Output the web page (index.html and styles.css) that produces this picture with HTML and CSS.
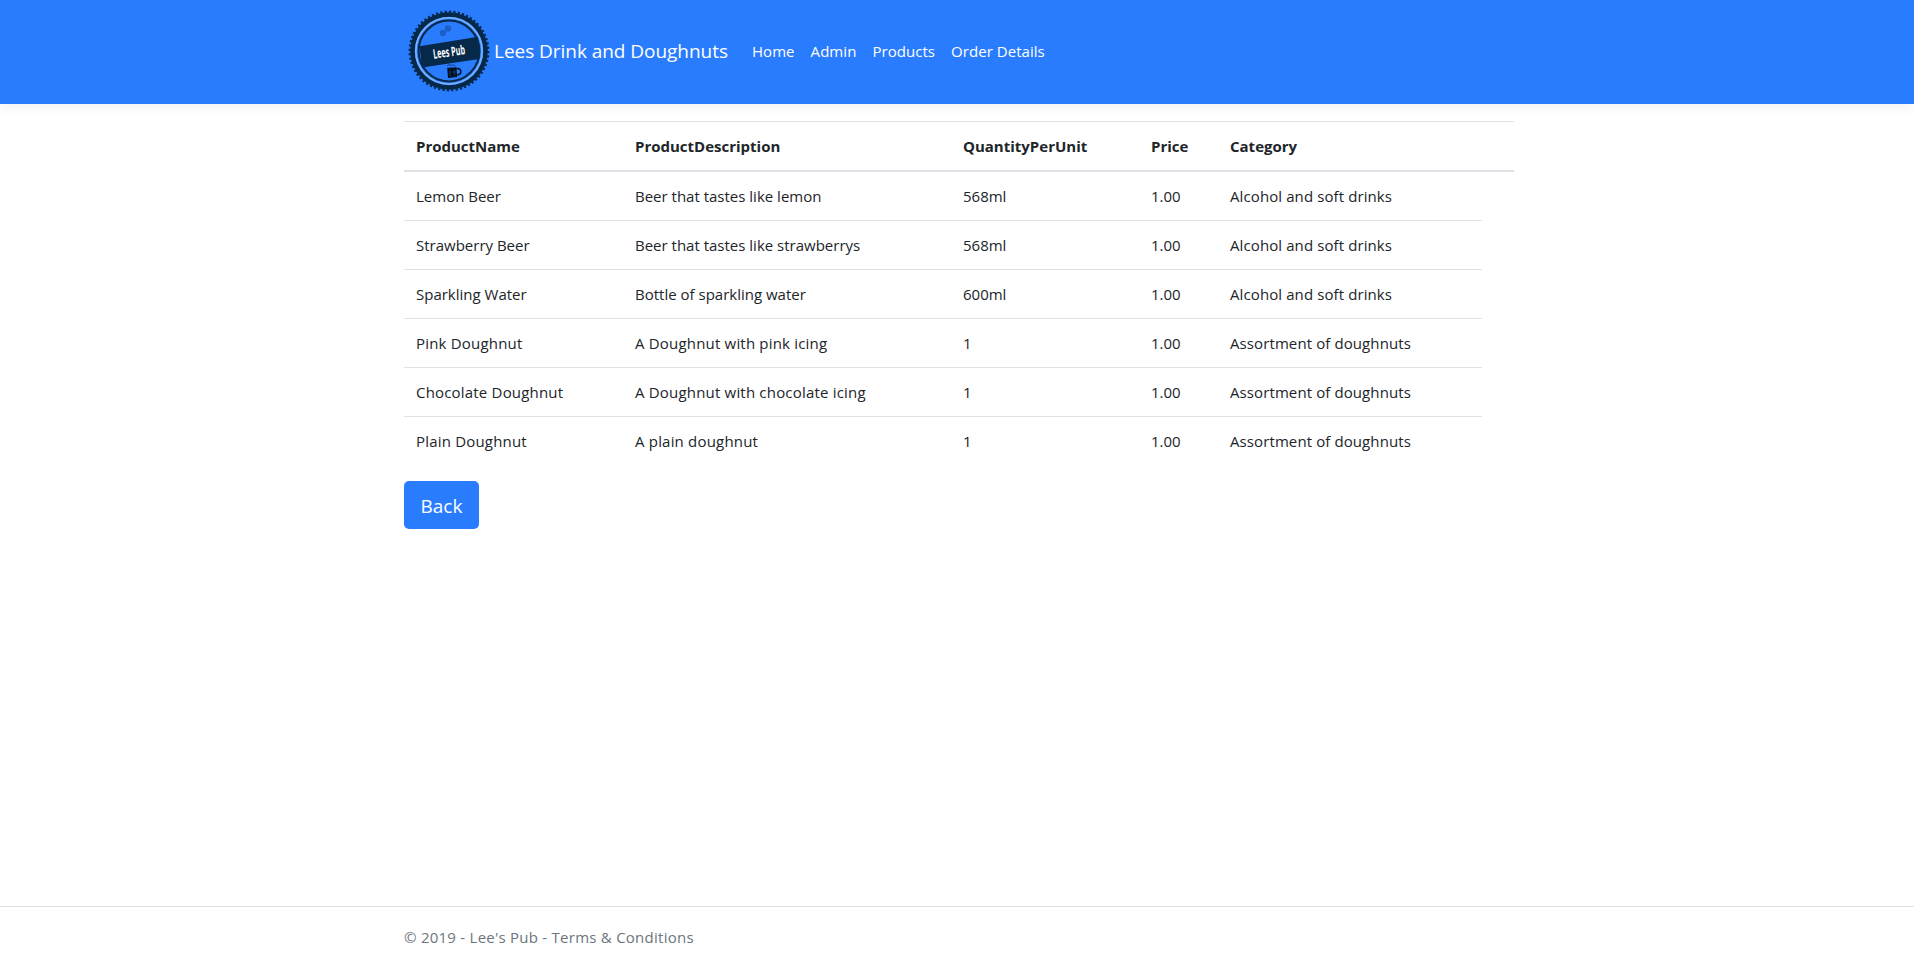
FILE: index.html
```html
<!DOCTYPE html>
<html lang="en">
<head>
<meta charset="utf-8">
<title>Products - Lees Drink and Doughnuts</title>
<link rel="stylesheet" href="styles.css">
</head>
<body>
<header class="navbar">
  <div class="container navbar-inner">
    <a class="brand">
      <svg class="logo" viewBox="0 0 90 90" width="90" height="90">
        <circle class="logo-teeth" cx="45" cy="45" r="38.8" pathLength="112"/>
        <circle class="logo-rim" cx="45" cy="45" r="34.2"/>
        <circle class="logo-light" cx="45" cy="45" r="33.2"/>
        <circle class="logo-inner" cx="45" cy="45" r="30.4"/>
        <g class="logo-candy"><circle cx="39" cy="27" r="3.2"/><circle cx="44" cy="22.5" r="3.2"/></g>
        <path class="logo-band" d="M15.5 40.3 L74 30.8 L75.5 53 L18 61.5 Z"/>
        <text class="logo-text" x="45" y="50.5" transform="rotate(-8 45 46)" textLength="32" lengthAdjust="spacingAndGlyphs">Lees Pub</text>
        <path class="logo-foam" d="M43 60 q2 -2.4 4 -.6 q2 -1.6 4.5 .6"/>
        <path class="logo-mug" d="M43.2 61.8 L52.5 61.2 L53.2 71 L44 72 Z"/>
        <path class="logo-handle" d="M52.5 62.8 q4 -.8 4.4 2.8 q0 3 -3.7 3.4"/>
        <path class="logo-glint" d="M45.8 64.5 l.4 5 M49 66.8 l1.6 -2 .3 4"/>
      </svg>
      <span class="brand-name">Lees Drink and Doughnuts</span>
    </a>
    <nav class="nav">
      <a>Home</a><a>Admin</a><a>Products</a><a>Order Details</a>
    </nav>
  </div>
</header>
<main class="container content">
  <table class="table">
    <colgroup><col class="c-name"><col class="c-desc"><col class="c-qty"><col class="c-price"><col class="c-cat"><col class="c-end"></colgroup>
    <thead><tr><th>ProductName</th><th>ProductDescription</th><th>QuantityPerUnit</th><th>Price</th><th>Category</th><th></th></tr></thead>
    <tbody>
      <tr><td>Lemon Beer</td><td>Beer that tastes like lemon</td><td>568ml</td><td>1.00</td><td>Alcohol and soft drinks</td></tr>
      <tr><td>Strawberry Beer</td><td>Beer that tastes like strawberrys</td><td>568ml</td><td>1.00</td><td>Alcohol and soft drinks</td></tr>
      <tr><td>Sparkling Water</td><td>Bottle of sparkling water</td><td>600ml</td><td>1.00</td><td>Alcohol and soft drinks</td></tr>
      <tr class="doughnut"><td>Pink Doughnut</td><td>A Doughnut with pink icing</td><td>1</td><td>1.00</td><td>Assortment of doughnuts</td></tr>
      <tr class="doughnut"><td>Chocolate Doughnut</td><td>A Doughnut with chocolate icing</td><td>1</td><td>1.00</td><td>Assortment of doughnuts</td></tr>
      <tr class="doughnut"><td>Plain Doughnut</td><td>A plain doughnut</td><td>1</td><td>1.00</td><td>Assortment of doughnuts</td></tr>
    </tbody>
  </table>
  <a class="btn">Back</a>
</main>
<footer class="footer"><div class="container">© 2019 - Lee's Pub - Terms &amp; Conditions</div></footer>
</body>
</html>
```
FILE: styles.css
```css
* { box-sizing: border-box; }
html, body { height: 100%; }
body {
  margin: 0;
  display: flex;
  flex-direction: column;
  background: #fff;
  color: #212529;
  font: 15px/24px "Segoe UI", "Open Sans", "Noto Sans", sans-serif;
}
.container { width: 1140px; margin-left: 389px; padding: 0 15px; }
.navbar {
  height: 104px;
  background: #2a7cff;
  box-shadow: 0 4px 12px rgba(0, 0, 0, .05);
}
.navbar-inner { display: flex; align-items: center; height: 102px; }
.brand { display: flex; align-items: center; width: 348px; color: #fff; }
.logo { display: block; flex: none; }
.brand-name { font-size: 19px; line-height: 30px; white-space: nowrap; letter-spacing: -.04px; }
.nav { display: flex; gap: 16px; color: #fff; letter-spacing: .05px; }
.logo-teeth { fill: #06294a; stroke: #06294a; stroke-width: 3.2; stroke-dasharray: 1 1; }
.logo-rim { fill: #2a7cff; }
.logo-light { fill: none; stroke: #78b0ff; stroke-width: 1.8; }
.logo-inner { fill: #2a7cff; stroke: #06294a; stroke-width: 2; }
.logo-candy { fill: #1c5fc9; }
.logo-band { fill: #06294a; }
.logo-text { fill: #fff; font: bold 13px "Open Sans", sans-serif; text-anchor: middle; }
.logo-foam { fill: none; stroke: #0d3f85; stroke-width: 1; }
.logo-mug { fill: #04121f; }
.logo-handle { fill: none; stroke: #04121f; stroke-width: 1.6; }
.logo-glint { fill: none; stroke: #164a94; stroke-width: .8; }
.content { flex: 1; padding-top: 17px; }
.table { width: 1110px; table-layout: fixed; border-collapse: separate; border-spacing: 0; margin-bottom: 16px; }
.c-name { width: 219px; }
.c-desc { width: 328px; }
.c-qty { width: 188px; }
.c-price { width: 79px; }
.c-cat { width: 264px; }
.c-end { width: 32px; }
th, td { padding: 12px; text-align: left; white-space: nowrap; line-height: 24px; }
th { border-top: 1px solid #dee2e6; border-bottom: 2px solid #dee2e6; font-weight: 700; }
th:last-child { padding: 0; }
tbody tr + tr td { border-top: 1px solid #dee2e6; }
td:nth-child(5) { letter-spacing: .1px; }
.doughnut td:nth-child(-n+2) { letter-spacing: .19px; }
.btn {
  display: flex;
  align-items: center;
  justify-content: center;
  width: 75px;
  height: 48px;
  padding-top: 2px;
  border-radius: 5px;
  background: #2a7cff;
  color: #fff;
  font-size: 19px;
}
.footer { height: 57px; border-top: 1px solid #dee2e6; padding-top: 18px; color: #6c757d; letter-spacing: .25px; }
```
